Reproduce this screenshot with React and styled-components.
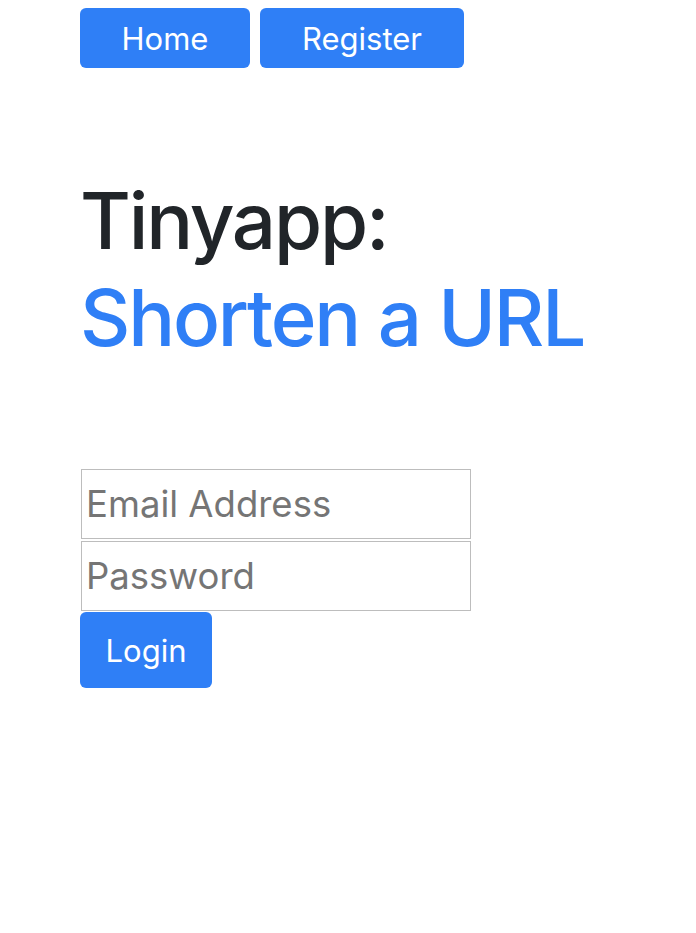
import React from 'react'
import styled, { createGlobalStyle } from 'styled-components'

const GlobalStyle = createGlobalStyle`
  body {
    margin: 0;
    background: #ffffff;
    font-family: Inter, "Noto Sans", sans-serif;
  }
`

const Page = styled.div`
  padding: 8px 0 0 80px;
`

const Nav = styled.nav`
  display: flex;
  gap: 10px;
`

const NavButton = styled.button`
  height: 60px;
  width: ${(p) => p.$width}px;
  border: none;
  border-radius: 6px;
  background: #2f7ff6;
  color: #ffffff;
  font-family: inherit;
  font-size: 31px;
  padding: 0;
`

const Title = styled.h1`
  margin: 104px 0 0;
  font-size: 78px;
  font-weight: 500;
  line-height: 97px;
  color: #212529;
  letter-spacing: -2.2px;
`

const Accent = styled.span`
  display: block;
  color: #2f7ff6;
`

const Form = styled.form`
  margin-top: 103px;
  display: flex;
  flex-direction: column;
  align-items: flex-start;
  gap: 2px;
`

const Field = styled.input`
  box-sizing: border-box;
  width: 390px;
  height: 70px;
  margin-left: 1px;
  border: 1px solid #bdbdbd;
  padding: 0 4px;
  font-family: inherit;
  font-size: 36.5px;
  color: #212529;
  outline: none;

  &::placeholder {
    color: #757575;
  }
`

const LoginButton = styled.button`
  width: 132px;
  height: 76px;
  margin-top: -1px;
  border: none;
  border-radius: 6px;
  background: #2f7ff6;
  color: #ffffff;
  font-family: inherit;
  font-size: 31px;
`

export default function App() {
  return (
    <>
      <GlobalStyle />
      <Page>
        <Nav>
          <NavButton $width={170}>Home</NavButton>
          <NavButton $width={204}>Register</NavButton>
        </Nav>
        <Title>
          Tinyapp:
          <Accent>Shorten a URL</Accent>
        </Title>
        <Form onSubmit={(e) => e.preventDefault()}>
          <Field type="email" placeholder="Email Address" />
          <Field type="password" placeholder="Password" />
          <LoginButton type="submit">Login</LoginButton>
        </Form>
      </Page>
    </>
  )
}
